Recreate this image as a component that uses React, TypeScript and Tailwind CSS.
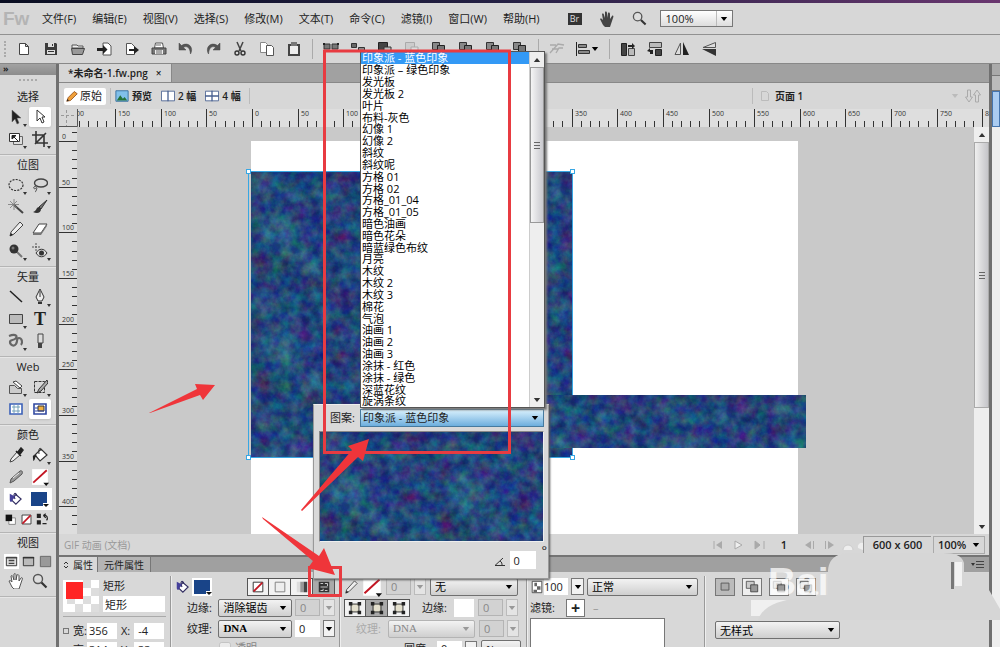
import type { ReactNode } from 'react';

const menus = ['文件(F)', '编辑(E)', '视图(V)', '选择(S)', '修改(M)', '文本(T)', '命令(C)', '滤镜(I)', '窗口(W)', '帮助(H)'];

const patterns = [
  '印象派 - 蓝色印象', '印象派 – 绿色印象', '发光板', '发光板 2', '叶片', '布料-灰色', '幻像 1', '幻像 2', '斜纹', '斜纹呢',
  '方格 01', '方格 02', '方格_01_04', '方格_01_05', '暗色油画', '暗色花朵', '暗蓝绿色布纹', '月亮', '木纹', '木纹 2',
  '木纹 3', '棉花', '气泡', '油画 1', '油画 2', '油画 3', '涂抹 - 红色', '涂抹 - 绿色', '深蓝花纹', '旋涡条纹',
];

const icons: Record<string, ReactNode> = {
  file: <path d="M3.500 2.500h6l3 3v8h-9z M9.500 2.500v3h3" fill="#fff" stroke="#444" />,
  save: <><path d="M2 2h11l1 1v11H2z" fill="#3c3c3c" /><path d="M5 2h6v4H5z M4 9h8v4H4z" fill="#ddd" /><path d="M9 3h1v2H9z M5 10h6v1H5z" fill="#333" /></>,
  open: <><path d="M2 4h5l1 1h5v2H2z" fill="#eee" stroke="#555" /><path d="M1.500 7.500h13l-2 6h-10z" fill="#999" stroke="#444" /></>,
  importFile: <><path d="M6 2h5l3 3v9H6z" fill="#fff" stroke="#555" /><path d="M0 7h6V4l4.500 4.500L6 13v-3H0z" fill="#222" /></>,
  exportFile: <><path d="M2.500 2.500h5l3 3v8h-8z" fill="#fff" stroke="#555" /><path d="M5 8h5V5l5 4-5 4v-3H5z" fill="#222" /></>,
  print: <><path d="M4.500 2h7l1 5h-9z" fill="#fff" stroke="#555" /><path d="M1 7h14v6H1z" fill="#777" stroke="#444" /><path d="M4 9h8v4H4z" fill="#eee" /><path d="M5 10h6M5 12h6M5 4h5" stroke="#666" /></>,
  undo: <path d="M1 2v7h7L5.500 6.500C9 4 12 7 12.500 13 16 7 11 0 3.500 4.500z" fill="#555" stroke="#444" strokeWidth=".5" />,
  redo: <path d="M15 2v7H8l2.500-2.500C7 4 4 7 3.500 13 0 7 5 0 12.500 4.500z" fill="#555" stroke="#444" strokeWidth=".5" />,
  cut: <><path d="M5 1l4 9M11 1L7 10" stroke="#444" strokeWidth="1.500" fill="none" /><circle cx="5" cy="12" r="2" fill="none" stroke="#333" strokeWidth="1.400" /><circle cx="11" cy="12" r="2" fill="none" stroke="#333" strokeWidth="1.400" /></>,
  copy: <><path d="M1.500 1.500h5l2 2v8h-7z" fill="#fff" stroke="#888" /><path d="M7.500 4.500h5l2 2v8h-7z" fill="#fff" stroke="#555" /></>,
  paste: <><path d="M2 3h12v12H2z" fill="#444" /><path d="M4 5h8v8H4z" fill="#eee" /><path d="M5 1h6v4H5z" fill="#777" /></>,
  group: <><path d="M1 3h6v5H1z M9 3h6v5H9z" fill="#777" stroke="#333" /><path d="M0 2h2v2H0z M14 2h2v2h-2z" fill="#222" /></>,
  ungroup: <><path d="M1.500 2.500h5v4h-5z" fill="#666" stroke="#333" /><path d="M8.500 6.500h6v4h-6z" fill="#888" stroke="#333" /></>,
  join: <><path d="M1.500 1.500h9v9h-9z" fill="#444" stroke="#222" /><path d="M7 6h7v7H7z" fill="#bbb" stroke="#333" /></>,
  joinOff: <><path d="M1.500 1.500h9v9h-9z" fill="#ccc" stroke="#aaa" /><path d="M7 6h7v7H7z" fill="#ddd" stroke="#aaa" /></>,
  front: <><path d="M1.500 1.500h7v7h-7z" fill="#888" stroke="#333" /><path d="M6.500 4.500h7v7h-7z" fill="#777" stroke="#222" /></>,
  path: <path d="M1 4h6M3 8h6M1 12l8-9 6 1M7 12l3-5h4" fill="none" stroke="#aaa" strokeWidth="1.300" />,
  align: <><path d="M1.500 1v14" stroke="#222" /><path d="M3.500 3.500h8v3h-8z M3.500 9.500h11v3h-11z" fill="#888" stroke="#333" /></>,
  rotateCw: <><path d="M1.500 2.500h5v12h-5z" fill="#444" stroke="#222" /><path d="M8.500 7.500h6v7h-6z" fill="#bbb" stroke="#444" /><path d="M8 4h4V2l3 3-3 3V6H8z" fill="#222" /></>,
  rotateCcw: <><path d="M2.500 1.500h12v5h-12z" fill="#bbb" stroke="#444" /><path d="M8.500 8.500h6v6h-6z" fill="#444" stroke="#222" /><path d="M6 13H3v-2L0 10l3-3v2h3z" fill="#222" /></>,
  flipH: <><path d="M6.500 2v11.500H1z" fill="#ddd" stroke="#555" /><path d="M9 1v13h6z" fill="#222" /></>,
  flipV: <><path d="M14.500 1.500v5H2z" fill="#ddd" stroke="#555" /><path d="M1 8h14v7z" fill="#333" /></>,
  pointer: <path d="M4 1v12l3-3 2 5 2-1-2-5h4z" fill="#222" stroke="#666" strokeWidth=".5" />,
  subPointer: <path d="M5 1v11l3-3 2 5 2-1-2-5h3z" fill="#fff" stroke="#333" />,
  scale: <><path d="M5.500 5.500h9v8h-9z" fill="#ddd" stroke="#666" /><path d="M1.500 2.500h10v8h-10z" fill="#fff" stroke="#333" /><path d="M4 4.500h4L4 8z M5 5l5 5" fill="#222" stroke="#222" /></>,
  crop: <path d="M4 0v12h12M0 4h12v12M3 13L14 2" fill="none" stroke="#333" strokeWidth="1.600" />,
  marquee: <ellipse cx="8" cy="8" rx="7" ry="5.500" fill="none" stroke="#333" strokeDasharray="2 1.200" strokeWidth="1.200" />,
  lasso: <><ellipse cx="9" cy="6" rx="6.500" ry="4" fill="none" stroke="#444" strokeWidth="1.400" /><path d="M4 9c-4 1-2 4 0 2s0 4-1 4" fill="none" stroke="#444" /></>,
  wand: <><path d="M6 6l9 8" stroke="#444" strokeWidth="2" /><path d="M6 0v11M0 5.500h11M2 2l7 7M9 2L2 9" stroke="#777" strokeWidth=".8" /></>,
  brush: <><path d="M15 1L7 8l2 2z" fill="#777" stroke="#333" /><path d="M7 8c-3 0-2 4-6 5 4 2 8 1 8-3z" fill="#333" /></>,
  pencil: <><path d="M12 1l3 3-9 9-4 2 1-4z" fill="#eee" stroke="#444" /><path d="M2 15l1-3 2 2z" fill="#222" /></>,
  strokePencil: <><path d="M12 2c2-1 3 1 2 3l-8 7-4 2 1-4z" fill="#999" stroke="#555" /><path d="M5 9l6-5" stroke="#eee" /></>,
  eraser: <><path d="M7 3h8l-6 9H1z" fill="#fff" stroke="#444" /><path d="M1 12h8v2H1z M9 12l6-9v2l-6 9" fill="#777" /></>,
  blur: <><path d="M8 8l6 6" stroke="#777" strokeWidth="2" /><circle cx="6" cy="6" r="4.500" fill="#333" /><circle cx="5" cy="5" r="1.500" fill="#777" /></>,
  stamp: <><path d="M4 0v8M0 4h8" stroke="#555" strokeDasharray="2 1" /><path d="M4 10c3-5 8-5 11 0-3 5-8 5-11 0z" fill="#ddd" stroke="#333" /><circle cx="9.500" cy="10" r="2.500" fill="#333" /></>,
  line: <path d="M2 2l12 11" stroke="#222" strokeWidth="1.500" />,
  pen: <><path d="M8 0l4 8-2 4H6L4 8z" fill="#eee" stroke="#333" /><path d="M6 13h4v2H6z M7.500 2h1v6h-1z" fill="#333" /></>,
  rect: <path d="M1.500 3.500h13v9h-13z" fill="#bbb" stroke="#444" />,
  freeform: <path d="M1 3c5-2 9-1 7 2s-6 1-6 4 4 5 6 2 0-6 3-6 4 5 2 7" fill="none" stroke="#666" strokeWidth="2.200" />,
  knife: <><path d="M6 1h5v9H6z" fill="#ddd" stroke="#444" /><path d="M6 10h4v5H6z" fill="#444" /></>,
  hotspot: <><path d="M1.500 6.500h5l3 3h4v5h-12z" fill="#ccc" stroke="#555" /><path d="M5 3l7 6 2-2-6-5z" fill="#fff" stroke="#444" /></>,
  slice: <><path d="M2.500 2.500h10v11h-10z" fill="none" stroke="#333" strokeDasharray="3 1" /><path d="M15 1l-8 9-2 4 4-2 7-8z" fill="#aaa" stroke="#333" /></>,
  hideSlice: <><path d="M2 3h12v10H2z" fill="#fff" stroke="#3c62b8" strokeWidth="1.600" /><path d="M4 6h8M4 10h8M6 4v8M10 4v8" stroke="#72a0b8" /></>,
  showSlice: <><path d="M2 3h12v10H2z" fill="#fff" stroke="#3048a0" strokeWidth="1.600" /><path d="M6 5h6v5H6z" fill="#f0b040" stroke="#333" /><path d="M3 7h3M3 10h9" stroke="#3048a0" /></>,
  dropper: <><path d="M9 5l3 3-7 6-3 1 1-3z" fill="#eee" stroke="#444" /><path d="M8 4l5 5M10 5l3-4 2 2-3 4z" fill="#222" stroke="#222" strokeWidth="1.500" /></>,
  bucket: <><path d="M3 8l6-6 6 6-7 6z" fill="#fff" stroke="#333" strokeWidth="1.200" /><path d="M7 7C6 1 9-1 9 4" fill="none" stroke="#333" /><path d="M3 8c-4 0-1 4-2 6 3-1 1-4 4-5z" fill="#222" /></>,
  fillBucket: <><path d="M4 9l5-6 6 5-6 6z" fill="#fff" stroke="#302c60" strokeWidth="1.300" /><path d="M8 8C5 1 9 0 10 4" fill="none" stroke="#302c60" strokeWidth="1.300" /><path d="M2 2v7c0 3 3 3 3 0l3-4z" fill="#45409a" /></>,
  hand: <path d="M4 14L1 8c1-1 2 0 3 1L3 3c1-1 2 0 2 1l1 3V1c1-1 2 0 2 1v5l1-5c1-1 2 0 2 1v5l2-3c1-1 2 0 1 2l-2 6-1 3H6z" fill="#fff" stroke="#444" strokeWidth=".9" />,
  handDark: <path d="M4 14L1 8c1-1 2 0 3 1L3 3c1-1 2 0 2 1l1 3V1c1-1 2 0 2 1v5l1-5c1-1 2 0 2 1v5l2-3c1-1 2 0 1 2l-2 6-1 3H6z" fill="#444" />,
  zoom: <><circle cx="6" cy="6" r="4.500" fill="#ddd" stroke="#555" strokeWidth="1.400" /><path d="M9.500 9.500l5 5" stroke="#333" strokeWidth="2.200" /></>,
  screen: <><path d="M2.500 3.500h11v9h-11z" fill="#ddd" stroke="#333" /><path d="M2 4h12M5 7h6M5 10h6" stroke="#444" strokeWidth="1.500" /></>,
  screenMenu: <><path d="M2.500 3.500h11v9h-11z" fill="#bbb" stroke="#333" /><path d="M2 4h12" stroke="#333" strokeWidth="1.500" /></>,
  screenFull: <path d="M2.500 2.500h11v11h-11z" fill="#999" stroke="#666" />,
  noColor: <><path d="M1 1h14v14H1z" fill="#fff" /><path d="M2 13L14 2" stroke="#c31522" strokeWidth="1.600" /><path d="M11 13h5l-2.500 3z" fill="#111" /></>,
  noFill: <><path d="M2.500 2.500h11v11h-11z" fill="#fff" stroke="#222" /><path d="M3 13L13 3" stroke="#c31522" strokeWidth="2" /></>,
  defaults: <><path d="M6 6h8v8H6z" fill="#fff" stroke="#777" /><path d="M2 2h8v8H2z" fill="#111" /></>,
  swap: <><path d="M1 1h5v5H1z M1 9h5v5H1z" fill="#222" /><path d="M9 3c5-1 6 3 4 6M9 3l3-2M9 3l3 3M13 13H8" fill="none" stroke="#222" strokeWidth="1.500" /></>,
  solid: <path d="M2.500 2.500h11v11h-11z" fill="#eee" stroke="#777" />,
  gradient: <><path d="M2 2h4v12H2z" fill="#ddd" /><path d="M6 2h4v12H6z" fill="#999" /><path d="M10 2h4v12h-4z" fill="#444" /></>,
  texture: <><path d="M2 2h12v12H2z" fill="#333" /><path d="M4 4h3M9 4h3v3M4 8h8M4 12h3v-2M9 12h3" stroke="#ddd" fill="none" /></>,
  node: <><path d="M3.500 3.500h9v9h-9z" fill="#e4e0cd" stroke="#222" /><path d="M1 1h4v4H1z M11 1h4v4h-4z M1 11h4v4H1z M11 11h4v4h-4z" fill="#222" /></>,
  opacity: <><path d="M2.500 1.500h11v13h-11z" fill="#fff" stroke="#444" /><path d="M5 3h3v4H5z M8 7h4v4H8z M4 11h4v3H4z" fill="#666" /></>,
  box: <path d="M3.500 3.500h9v8h-9z" fill="#aaa" stroke="#555" />,
  boxes: <><path d="M1.500 1.500h9v8h-9z" fill="#ccc" stroke="#555" /><path d="M6.500 5.500h8v8h-8z" fill="#999" stroke="#444" /></>,
  picture: <><path d="M1 2h14v12H1z" fill="#81c0ea" stroke="#346b9b" /><path d="M2 13l4-6 3 4 2-2 3 4z" fill="#25733a" /></>,
  two: <><path d="M.5 2.500h15v11H.5z" fill="#fff" stroke="#486090" /><path d="M8 2v12" stroke="#486090" strokeWidth="1.500" /></>,
  four: <><path d="M.5 2.500h15v11H.5z" fill="#fff" stroke="#486090" /><path d="M8 2v12M0 8h16" stroke="#486090" strokeWidth="1.500" /></>,
  orangePencil: <><path d="M11 2l4 3-9 9-5 1 2-5z" fill="#f0a03a" stroke="#874311" /><path d="M1 15l1-3 2 2z" fill="#222" /></>,
};

function Icon({ name, className = 'size-4' }: { name: string; className?: string }) {
  return <svg viewBox="0 0 16 16" className={`shrink-0 ${className}`} fill="none" aria-hidden="true">{icons[name]}</svg>;
}

function Arrow({ className = 'text-black' }: { className?: string }) {
  return <svg viewBox="0 0 8 5" className={`h-1 w-2 shrink-0 ${className}`} aria-hidden="true"><path d="M0 0h8L4 5z" fill="currentColor" /></svg>;
}

function Select({ label, value, className = '', disabled = false }: { label: string; value: string; className?: string; disabled?: boolean }) {
  return (
    <span className={`relative flex h-[18px] items-center rounded-xs border ${disabled ? 'border-[#b4b4b4] text-[#888]' : 'border-[#707070] text-black'} bg-gradient-to-b from-[#f3f3f3] to-[#cfcfcf] ${className}`}>
      <select aria-label={label} disabled={disabled} className="h-full w-full appearance-none bg-transparent pl-1 leading-none opacity-100 outline-none">
        <option>{value}</option>
      </select>
      <span className="pointer-events-none absolute right-1"><Arrow className={disabled ? 'text-[#999]' : 'text-black'} /></span>
    </span>
  );
}

function NumberBox({ label, value, disabled = false }: { label: string; value: string; disabled?: boolean }) {
  return (
    <span className="flex h-[17px] gap-[3px]">
      <input aria-label={label} defaultValue={value} disabled={disabled} className={`w-[25px] pl-1 ${disabled ? 'border border-[#b4b4b4] bg-[#d2d2d2] text-[#888]' : 'bg-white'}`} />
      <button aria-label={`${label} 选项`} disabled={disabled} className={`flex w-3 items-center justify-center border ${disabled ? 'border-[#bbb] bg-[#e4e4e4]' : 'border-[#777] bg-[#f2f2f2]'}`}>
        <Arrow className={disabled ? 'text-[#999]' : 'text-black'} />
      </button>
    </span>
  );
}

// Small repeating tile of coloured blots with grain over it
const blots: [number, number, number, number, string][] = [
  [28, 58, 20, 15, '#31759a'], [12, 14, 9, 9, '#4b5f95'], [48, 40, 8, 9, '#50269b'], [10, 92, 7, 10, '#571857'],
  [30, 97, 8, 6, '#1d6057'], [62, 96, 10, 8, '#3981a0'], [90, 8, 12, 8, '#501c80'], [92, 40, 9, 6, '#562691'],
  [88, 68, 8, 9, '#552078'], [62, 110, 7, 5, '#59204f'], [75, 22, 13, 10, '#245f9a'], [40, 78, 19, 7, '#2b6a94'],
  [66, 62, 13, 14, '#21349b'], [105, 95, 15, 10, '#23639c'], [104, 54, 12, 12, '#1c4b8c'], [35, 20, 15, 8, '#1c658e'],
  [8, 36, 7, 8, '#422383'], [110, 22, 8, 9, '#193a75'],
];

function Texture({ id, className = '' }: { id: string; className?: string }) {
  return (
    <svg className={`block ${className}`} aria-hidden="true">
      <defs>
        <filter id={`${id}-soft`} x="-20%" y="-20%" width="140%" height="140%" colorInterpolationFilters="sRGB"><feGaussianBlur stdDeviation="4" /></filter>
        <filter id={`${id}-grain`} x="0" y="0" width="100%" height="100%" colorInterpolationFilters="sRGB">
          <feTurbulence type="fractalNoise" baseFrequency=".1" numOctaves="4" seed="8" />
          <feColorMatrix values=".8 0 0 0 -.26  0 1.1 0 0 -.28  0 0 .7 0 .04  0 0 0 0 .42" />
        </filter>
        <pattern id={id} width="117" height="117" patternUnits="userSpaceOnUse">
          <rect width="117" height="117" fill="#1b4387" />
          <g filter={`url(#${id}-soft)`}>
            {[-117, 0, 117].map((dx) => [-117, 0, 117].map((dy) => blots.map(([x, y, rx, ry, fill], i) => (
              <ellipse key={`${dx}${dy}${i}`} cx={x + dx} cy={y + dy} rx={rx} ry={ry} fill={fill} />
            ))))}
          </g>
        </pattern>
      </defs>
      <rect width="100%" height="100%" fill={`url(#${id})`} />
      <rect width="100%" height="100%" filter={`url(#${id}-grain)`} />
    </svg>
  );
}

const unit = 9.13;

function TopRuler() {
  return (
    <svg className="h-[18px] w-full bg-[#dedede]" aria-hidden="true">
      {Array.from({ length: 105 }, (_, i) => i - 20).map((n) => {
        const x = Math.round(193 + n * unit);
        const major = n % 5 === 0;
        return (
          <g key={n}>
            <path d={`M${x + 0.5} ${major ? 0 : 12}V18`} stroke="#333" />
            {major && <text x={x + 3} y="7" fontSize="7" fill="#333">{Math.abs(n * 10)}</text>}
          </g>
        );
      })}
      <path d="M0 0h18v18H0z" fill="#d8d8d8" />
      <path d="M2 6.500h15M7.500 1v17" stroke="#999" strokeDasharray="3 2" />
      <path d="M0 17.500h18.500V0" stroke="#555" fill="none" />
    </svg>
  );
}

function SideRuler() {
  return (
    <svg className="h-full w-[18px] shrink-0 bg-[#dedede]" aria-hidden="true">
      {Array.from({ length: 46 }, (_, i) => i - 1).map((n) => {
        const y = Math.round(14 + n * unit);
        const major = n % 5 === 0;
        return (
          <g key={n}>
            <path d={`M${major ? 0 : 13} ${y + 0.5}H18`} stroke="#333" />
            {major && <text x="3" y={y - 2} fontSize="7" fill="#333">{n * 10}</text>}
          </g>
        );
      })}
    </svg>
  );
}

function Tool({ icon, label, active = false, menu = false }: { icon: string; label: string; active?: boolean; menu?: boolean }) {
  return (
    <button aria-label={label} className={`relative flex h-5 w-[22px] items-center justify-center rounded-xs ${active ? 'bg-white shadow-sm' : ''}`}>
      <Icon name={icon} />
      {menu && <svg viewBox="0 0 4 3" className="absolute right-0 bottom-0 h-[3px] w-1"><path d="M0 0h4L2 3z" fill="#333" /></svg>}
    </button>
  );
}

type ToolItem = [string, string, string?];
const sections: { title: string; tools: ToolItem[] }[] = [
  { title: '选择', tools: [['pointer', '指针', 'menu'], ['subPointer', '部分选定', 'active'], ['scale', '缩放', 'menu'], ['crop', '裁剪', 'menu']] },
  { title: '位图', tools: [['marquee', '选取框', 'menu'], ['lasso', '套索', 'menu'], ['wand', '魔术棒'], ['brush', '刷子'], ['pencil', '铅笔'], ['eraser', '橡皮擦'], ['blur', '模糊', 'menu'], ['stamp', '图章', 'menu']] },
  { title: '矢量', tools: [['line', '直线'], ['pen', '钢笔', 'menu'], ['rect', '矩形', 'menu'], ['text', '文本'], ['freeform', '自由变形', 'menu'], ['knife', '刀子']] },
  { title: 'Web', tools: [['hotspot', '热点', 'menu'], ['slice', '切片', 'menu'], ['hideSlice', '隐藏切片'], ['showSlice', '显示切片', 'active']] },
];

function Swatch() {
  return (
    <button aria-label="填充颜色" className="relative h-[18px] w-5 border-2 border-white bg-[#194488]">
      <svg viewBox="0 0 6 5" className="absolute -right-[2px] -bottom-[2px] h-[5px] w-[6px]" aria-hidden="true"><path d="M0 0h6v5H0z" fill="#fff" /><path d="M0 1h6L3 4z" fill="#111" /></svg>
    </button>
  );
}

function ToolPanel() {
  const title = 'flex h-[19px] items-center justify-center';
  const group = 'border-b border-[#b5b5b5] pb-1 shadow-[0_1px_0_#e6e6e6]';
  return (
    <aside className="w-[59px] shrink-0 border-r-[3px] border-[#707070] bg-[#d8d8d8]">
      <div className="h-[11px] bg-gradient-to-b from-[#a2a2a2] to-[#8c8c8c] pl-[3px] text-[9px] leading-[9px] font-bold">»</div>
      <div className="mx-auto mt-1 mb-[6px] w-[18px] border-b-2 border-dotted border-[#aaa]" />
      {sections.map((section) => (
        <section key={section.title} className={group}>
          <h2 className={title}>{section.title}</h2>
          <div className="grid grid-cols-[24px_24px] justify-start pl-1">
            {section.tools.map(([icon, label, state]) => (
              <div key={icon} className="flex h-[22px] items-center justify-center">
                {icon === 'text'
                  ? <button aria-label={label} className="font-['Liberation_Serif',serif] text-[18px] leading-5 font-bold">T</button>
                  : <Tool icon={icon} label={label} active={state === 'active'} menu={state === 'menu'} />}
              </div>
            ))}
          </div>
        </section>
      ))}
      <section className={group}>
        <h2 className={title}>颜色</h2>
        <div className="grid grid-cols-[24px_24px] justify-start pl-1">
          <div className="flex h-[22px] items-center justify-center"><Tool icon="dropper" label="滴管" /></div>
          <div className="flex h-[22px] items-center justify-center"><Tool icon="bucket" label="油漆桶" menu /></div>
          <div className="flex h-[22px] items-center justify-center"><Tool icon="strokePencil" label="笔触颜色" /></div>
          <button aria-label="无笔触" className="flex h-[22px] items-center justify-center"><Icon name="noColor" className="size-[18px]" /></button>
          <div className="col-span-2 flex h-[22px] items-center justify-around bg-white"><Icon name="fillBucket" className="size-[14px]" /><Swatch /></div>
        </div>
        <div className="flex h-[18px] items-center gap-[3px] pl-1">
          <button aria-label="默认颜色"><Icon name="defaults" className="size-[13px]" /></button>
          <button aria-label="无颜色"><Icon name="noFill" className="size-[13px]" /></button>
          <button aria-label="交换颜色"><Icon name="swap" className="size-[13px]" /></button>
        </div>
      </section>
      <section className={group}>
        <h2 className={title}>视图</h2>
        <div className="flex h-[18px] items-center gap-[2px] pl-1">
          <button aria-label="标准屏幕" className="bg-white"><Icon name="screen" className="size-[15px]" /></button>
          <button aria-label="带菜单的全屏"><Icon name="screenMenu" className="size-[15px]" /></button>
          <button aria-label="全屏"><Icon name="screenFull" className="size-[15px]" /></button>
        </div>
        <div className="flex h-[22px] items-center gap-1 pl-2">
          <button aria-label="手形"><Icon name="hand" /></button>
          <button aria-label="缩放工具"><Icon name="zoom" className="ml-1 size-4" /></button>
        </div>
      </section>
    </aside>
  );
}

function Handle({ className }: { className: string }) {
  return <span className={`absolute size-[5px] border border-[#38a7e4] bg-white ${className}`} />;
}

function Canvas() {
  return (
    <div className="relative min-w-0 flex-1 overflow-hidden bg-[#c9c9c9]">
      <div className="absolute top-[14px] left-[174px] h-[548px] w-[547px] bg-white" />
      <div className="absolute top-[44px] left-[171px] h-[287px] w-[325px] border border-[#38a7e4] pl-[2px]">
        <Texture id="large" className="size-full" />
        <Handle className="-top-[3px] -left-[3px]" />
        <Handle className="-top-[3px] -right-[3px]" />
        <Handle className="-bottom-[3px] -left-[3px]" />
        <Handle className="-right-[3px] -bottom-[3px]" />
      </div>
      <Texture id="bar" className="absolute top-[268px] left-[340px] h-[53px] w-[389px]" />
    </div>
  );
}

function ScrollArrow({ up = false }: { up?: boolean }) {
  return <button aria-label={up ? '向上滚动' : '向下滚动'} className="flex h-[15px] shrink-0 items-center justify-center"><Arrow className={up ? 'rotate-180 text-[#333]' : 'text-[#333]'} /></button>;
}

function Grip() {
  return <svg viewBox="0 0 6 8" className="h-2 w-[6px]" aria-hidden="true"><path d="M0 1.500h6M0 4.500h6M0 7.500h6" stroke="#666" /></svg>;
}

function StatusBar() {
  return (
    <footer className="flex h-[23px] shrink-0 items-center border-b-2 border-[#747474] bg-[#d7d7d7] font-semibold">
      <span className="pl-[5px] text-[10px] font-normal text-[#999]">GIF 动画 (文档)</span>
      <div className="ml-auto flex items-center gap-[11px] text-[#aaa]">
        <svg viewBox="0 0 52 10" className="h-[10px] w-[52px]" aria-hidden="true"><path d="M1 1v8M42 1l5 4-5 4zM51 1v8" stroke="#aaa" fill="#aaa" /><path d="M9 1v8L3 5z" fill="#aaa" /><path d="M22 1l7 4-7 4z" fill="#eee" stroke="#aaa" /></svg>
        <span className="px-[5px] text-[#222]">1</span>
        <svg viewBox="0 0 60 10" className="h-[10px] w-[60px]" aria-hidden="true"><path d="M8 1v8L2 5zM25 1v8l6-4z" fill="#aaa" /><path d="M10.500 1v8M22.500 1v8" stroke="#aaa" /><path d="M40 10a5 5 0 0 1 10 0" fill="#eee" stroke="#ccc" /><path d="M55 8a4 4 0 0 1 5-5v7z" fill="#eee" /></svg>
      </div>
      <span className="flex h-[18px] w-[68px] items-center justify-center border-t border-l border-[#999] whitespace-nowrap">600 x 600</span>
      <label className="relative ml-[2px] flex h-[18px] w-[52px] items-center border border-[#aaa]">
        <select aria-label="文档缩放" className="h-full w-full appearance-none bg-transparent pl-1"><option>100%</option></select>
        <span className="pointer-events-none absolute right-1"><Arrow /></span>
      </label>
      <span className="w-1" />
    </footer>
  );
}

function IconButtons({ names, label, selected }: { names: string[]; label: string; selected: number }) {
  return (
    <div className="flex h-[18px]">
      {names.map((name, i) => (
        <button key={i} aria-label={`${label} ${i + 1}`} className={`flex w-[22px] items-center justify-center border border-[#555] ${i === selected ? 'bg-[#aaa]' : 'bg-[#f2f2f2]'} ${i ? 'border-l-0' : ''}`}><Icon name={name} className="size-[14px]" /></button>
      ))}
    </div>
  );
}

function Properties() {
  const row = 'flex h-[21px] items-center';
  const col = 'shrink-0 border-r border-[#999] shadow-[1px_0_0_#eee]';
  return (
    <section className="h-[90px] shrink-0 overflow-hidden bg-[#d8d8d8]">
      <nav className="flex h-[15px] bg-[#a0a0a0]">
        <button className="flex items-center gap-1 bg-[#d8d8d8] px-1 text-[10px] leading-none"><svg viewBox="0 0 6 8" className="h-2 w-[6px]" fill="none" stroke="#333"><path d="M1 3l2-2 2 2M1 5l2 2 2-2" /></svg>属性</button>
        <button className="border-x border-[#777] bg-[#b4b4b4] px-[6px] text-[10px] leading-none">元件属性</button>
        <button aria-label="面板菜单" className="ml-auto pr-1"><svg viewBox="0 0 14 9" className="h-[9px] w-[14px]"><path d="M0 3h4L2 6z" fill="#333" /><path d="M5 1.500h8M5 4.500h8M5 7.500h8" stroke="#444" /></svg></button>
      </nav>
      <div className="flex h-[85px] pt-1">
        <div className={`${col} w-[112px] px-1`}>
          <div className="flex gap-1 border-b border-[#aaa] pt-1 pb-1">
            <svg viewBox="0 0 36 32" className="h-8 w-9 shrink-0"><path d="M0 0h36v32H0z" fill="#fff" /><path d="M20 0h8v8h-8zM28 8h8v8h-8zM20 16h8v8h-8zM28 24h8v8h-8zM12 24h8v8h-8zM4 16h8v8H4z" fill="#ddd" /><path d="M3 2h17v17H3z" fill="#ff2525" /></svg>
            <div className="flex min-w-0 flex-col gap-1">
              <span className="leading-3">矩形</span>
              <input aria-label="对象名称" defaultValue="矩形" className="h-[16px] w-[62px] bg-white pl-[2px] leading-none" />
            </div>
          </div>
          <div className="flex h-[23px] items-center pt-1">
            <span className="mr-1 size-[6px] border border-[#777]" />
            <label className="flex items-center">宽:<input defaultValue="356" className="h-4 w-[30px] bg-white pl-[2px]" /></label>
            <label className="ml-1 flex items-center gap-1">X:<input defaultValue="-4" className="h-4 w-[30px] bg-white pl-1" /></label>
          </div>
          <div className="flex h-5 items-center pl-[10px]">
            <label className="flex items-center">高:<input defaultValue="314" className="h-4 w-[30px] bg-white pl-[2px]" /></label>
            <label className="ml-1 flex items-center gap-1">Y:<input defaultValue="33" className="h-4 w-[30px] bg-white pl-1" /></label>
          </div>
        </div>
        <div className={`${col} w-[169px] px-1`}>
          <div className={row}>
            <Icon name="fillBucket" className="mr-[3px] size-[14px]" />
            <Swatch />
            <span className="ml-auto"><IconButtons names={['noFill', 'solid', 'gradient', 'texture']} label="填充" selected={3} /></span>
          </div>
          <div className={row}><span className="ml-3 w-8">边缘:</span><Select label="边缘" value="消除锯齿" className="mr-[3px] w-[75px]" /><NumberBox label="边缘量" value="0" disabled /></div>
          <div className={row}><span className="ml-3 w-8">纹理:</span><Select label="纹理" value="DNA" className="mr-[3px] w-[75px] font-['Liberation_Serif',serif] font-bold" /><NumberBox label="纹理量" value="0" /></div>
          <label className="ml-11 flex h-[18px] items-center gap-1 text-[#888]"><input type="checkbox" disabled className="size-3" />透明</label>
        </div>
        <div className={`${col} w-[187px] px-1`}>
          <div className={row}>
            <Icon name="pencil" className="size-[14px]" />
            <button aria-label="笔触颜色" className="mr-1 ml-1"><Icon name="noColor" className="size-5" /></button>
            <NumberBox label="笔触宽度" value="0" disabled />
            <Select label="笔触类型" value="无" className="ml-1 w-[88px]" />
          </div>
          <div className={row}>
            <IconButtons names={['node', 'node', 'node']} label="笔触位置" selected={1} />
            <span className="ml-3 w-8">边缘:</span>
            <span className="mr-1 h-[18px] w-5 bg-white" />
            <NumberBox label="笔触边缘" value="0" disabled />
          </div>
          <div className={row}><span className="ml-3 w-8 text-[#aaa]">纹理:</span><Select label="笔触纹理" value="DNA" disabled className="mr-1 w-[87px] font-['Liberation_Serif',serif]" /><NumberBox label="笔触纹理量" value="0" disabled /></div>
          <div className="flex h-5 items-center pl-[60px]"><span className="mr-2">圆度:</span><NumberBox label="圆度" value="0" /><Select label="圆度单位" value="%" className="ml-1 w-10" /></div>
        </div>
        <div className={`${col} w-[178px] px-[3px]`}>
          <div className={row}>
            <Icon name="opacity" className="size-[14px]" />
            <input aria-label="不透明度" defaultValue="100" className="h-[17px] w-[24px] bg-white" />
            <button aria-label="不透明度选项" className="mx-[3px] flex h-[17px] w-[13px] items-center justify-center border border-[#777] bg-[#f2f2f2]"><Arrow /></button>
            <Select label="混合模式" value="正常" className="w-[111px]" />
          </div>
          <div className={row}><span className="w-9">滤镜:</span><button aria-label="添加滤镜" className="h-[18px] w-[19px] border border-[#777] bg-white text-[16px] leading-none font-bold">+</button><span className="pl-2 text-[#999]">–</span></div>
          <div className="h-10 w-[135px] border border-[#777] bg-white" />
        </div>
        <div className="flex-1 pl-[10px]">
          <div className="flex h-[21px] items-center gap-[7px]">
            {['box', 'boxes', 'boxes', 'boxes'].map((name, i) => (
              <button key={i} aria-label={`路径组合 ${i + 1}`} className={`flex h-[18px] w-5 items-center justify-center border border-[#777] ${i ? 'bg-[#eee]' : 'bg-[#bbb]'}`}><Icon name={name} className="size-[14px]" /></button>
            ))}
          </div>
          <div className="mt-[3px] ml-9 h-4 w-12 bg-[#f0f0f0]" />
          <div className="pt-[5px]"><Select label="样式" value="无样式" className="w-[125px]" /></div>
        </div>
      </div>
    </section>
  );
}

function PatternPopup() {
  return (
    <>
      <div className="absolute top-[404px] left-[313px] w-[236px] border border-[#999] border-t-[#eee] bg-[#d9d9d9] pt-1 shadow-[1px_1px_2px_#555]">
        <div className="flex items-center pl-4">
          <span className="w-[30px]">图案:</span>
          <span className="relative flex h-[18px] flex-1 items-center border border-[#467a9e] bg-gradient-to-b from-[#d9f1fd] to-[#6caedd]">
            <select aria-label="图案" className="h-full w-full appearance-none bg-transparent pl-[2px]"><option>印象派 - 蓝色印象</option></select>
            <span className="pointer-events-none absolute right-1"><Arrow /></span>
          </span>
          <span className="w-1" />
        </div>
        <div className="mt-1 mr-1 ml-[5px] border border-[#eee] border-t-[#888] border-l-[#888]"><Texture id="preview" className="h-[109px] w-full" /></div>
        <label className="flex h-9 items-center justify-end gap-[5px] pr-px">
          <svg viewBox="0 0 11 8" className="mt-1 h-2 w-[11px]" fill="none" stroke="#333"><path d="M9 0L1 7.500h10M6 3c2 1 2 3 2 4" /></svg>
          <input aria-label="角度" defaultValue="0" className="h-[18px] w-[26px] bg-white pl-[3px]" />
          <span className="self-start text-[13px]">°</span>
        </label>
      </div>
      <div className="absolute top-[51px] left-[360px] flex h-[357px] w-[185px] border border-[#555] bg-white shadow-[2px_2px_2px_#777]">
        <ul role="listbox" aria-label="图案列表" className="flex min-w-0 flex-1 flex-col">
          {patterns.map((name, i) => (
            <li key={name} role="option" aria-selected={i === 0} className={`flex min-h-0 flex-1 items-center pl-px leading-none whitespace-nowrap ${i === 0 ? 'bg-[#3399f5] text-white' : 'text-black'}`}>{name}</li>
          ))}
        </ul>
        <div className="flex w-[15px] flex-col border-l border-[#ccc] bg-[#eee]">
          <ScrollArrow up />
          <div className="flex h-[156px] items-center justify-center border border-[#999] bg-gradient-to-r from-[#f5f5f5] to-[#c9c9ce]"><Grip /></div>
          <span className="flex-1" />
          <ScrollArrow />
        </div>
      </div>
    </>
  );
}

function Annotations() {
  return (
    <svg className="pointer-events-none absolute top-0 left-0 h-[647px] w-[1000px]" aria-hidden="true">
      <g fill="none" stroke="#e83b41" strokeWidth="3">
        <path d="M324.500 51h185v401.500h-185z" />
        <path d="M309.500 567.500h31v28h-31z" />
      </g>
      <g fill="#ef353a">
        <path d="M149 413l48-24-2-5 20 1-12 15-3-5-50 18z" />
        <path d="M301 510l51-60-4-4 21-7-6 22-5-4-56 54z" />
        <path d="M262 517l57 39 5-8 11 27-27-7 5-7-50-42z" />
      </g>
    </svg>
  );
}

function Watermark() {
  return (
    <svg viewBox="0 0 232 85" className="pointer-events-none absolute top-[549px] right-0 h-[85px] w-[232px] overflow-visible" aria-hidden="true">
      <text x="0" y="46" fontSize="39" fontWeight="bold" fill="#fff" fillOpacity=".72" fontFamily="Liberation Sans">Bai</text>
      <path d="M60 46V24C60 8 70 4 84 4h91c13 0 19 3 21 10v10h25v17l11 19v11H-10c4-13 20-20 42-22z" fill="#d6d6d6" />
      <path d="M187 13h7v24h-7z" fill="#f2f2f2" />
      <path d="M183 13h3v27h-3z" fill="#777" />
    </svg>
  );
}

export default function App() {
  const leftTools = ['file', 'save', 'open', 'importFile', 'exportFile', 'print', 'undo', 'redo', 'cut', 'copy', 'paste'];
  const groupTools = ['group', 'ungroup', 'join', 'joinOff', 'front', 'front', 'front', 'front'];
  return (
    <div className="relative flex h-screen w-full flex-col overflow-hidden bg-[#d7d7d7] font-['Open_Sans','Noto_Sans_CJK_SC',sans-serif] text-[11px] leading-4 text-[#222]">
      <div className="h-[3px] shrink-0 bg-gradient-to-r from-[#090d21] via-[#242044] to-[#69366f]" />
      <header className="flex h-8 shrink-0 items-center border-b border-[#919191]">
        <span className="w-[42px] pl-[3px] font-['Liberation_Sans',sans-serif] text-[19px] font-bold text-[#b4b4b4]">Fw</span>
        <nav className="flex gap-4 whitespace-nowrap">
          {menus.map((menu) => <button key={menu}>{menu}</button>)}
        </nav>
        <div className="ml-7 flex items-center gap-[17px]">
          <button aria-label="Bridge" className="h-3 w-[14px] bg-[#333] text-[9px] leading-3 text-[#ddd]">Br</button>
          <button aria-label="手形工具"><Icon name="handDark" /></button>
          <button aria-label="放大镜"><Icon name="zoom" className="size-[15px]" /></button>
        </div>
        <label className="relative ml-[13px] flex h-[17px] w-[73px] items-center border border-[#777] bg-gradient-to-b from-white to-[#ddd]">
          <select aria-label="缩放比例" className="h-full w-full appearance-none bg-transparent pl-[5px]"><option>100%</option></select>
          <span className="pointer-events-none absolute right-0 flex h-full w-4 items-center justify-center border-l border-[#bbb]"><Arrow /></span>
        </label>
      </header>
      <div className="flex h-[29px] shrink-0 items-center border-b border-[#888]">
        <span className="mr-[10px] ml-1 h-4 border-l-2 border-dotted border-[#aaa]" />
        <div className="flex gap-[11px]">{leftTools.map((name) => <button key={name} aria-label={name}><Icon name={name} /></button>)}</div>
        <span className="mx-[10px] h-5 border-l border-[#aaa]" />
        <div className="flex gap-[11px]">{groupTools.map((name, i) => <button key={i} aria-label={`${name} ${i}`}><Icon name={name} /></button>)}</div>
        <span className="mx-[10px] h-5 border-l border-[#aaa]" />
        <div className="flex items-center gap-[10px]"><Icon name="path" /><button aria-label="对齐" className="flex items-center"><Icon name="align" /><Arrow /></button></div>
        <span className="mx-[10px] h-5 border-l border-[#aaa]" />
        <div className="flex gap-[11px]">{['rotateCw', 'rotateCcw', 'flipH', 'flipV'].map((name) => <button key={name} aria-label={name}><Icon name={name} /></button>)}</div>
      </div>
      <div className="flex min-h-0 flex-1">
        <ToolPanel />
        <main className="flex min-w-0 flex-1 flex-col">
          <div className="flex h-[18px] shrink-0 bg-[#a1a1a1]">
            <button className="flex items-center gap-2 border-r border-[#888] bg-[#d6d6d6] px-[9px] text-[10px] leading-none font-semibold">*未命名-1.fw.png<span>×</span></button>
          </div>
          <div className="flex h-[27px] shrink-0 items-center border-t border-[#888] pl-[5px]">
            <button className="flex h-[17px] items-center gap-[2px] rounded-xs bg-white pr-1 pl-[2px]"><Icon name="orangePencil" className="size-3" />原始</button>
            <span className="mx-1 h-4 border-l border-[#bbb]" />
            <button className="mr-[9px] flex items-center gap-[3px] text-[10px] font-semibold"><Icon name="picture" className="size-[14px]" />预览</button>
            <button className="mr-[9px] flex items-center gap-[3px] text-[10px] font-semibold"><Icon name="two" className="size-[14px]" />2 幅</button>
            <button className="flex items-center gap-[3px] text-[10px] font-semibold"><Icon name="four" className="size-[14px]" />4 幅</button>
            <span className="mx-2 h-4 border-l border-[#bbb]" />
            <div className="ml-auto flex w-[237px] items-center border-l border-[#bbb] pl-[6px]">
              <svg viewBox="0 0 12 12" className="mr-1 size-3"><path d="M2.500 1.500h5l2 2v7h-7z" fill="none" stroke="#bbb" /></svg>
              <button className="text-[10px] font-semibold">页面 1</button>
              <span className="ml-auto"><Arrow className="text-[#bbb]" /></span>
              <svg viewBox="0 0 20 16" className="mx-[5px] h-4 w-5" fill="none" stroke="#aaa"><path d="M3.500 2v7h-2L5 14l3.500-5h-2V2zM11.500 14V7h-2L13 2l3.500 5h-2v7z" /></svg>
            </div>
          </div>
          <TopRuler />
          <div className="flex min-h-0 flex-1">
            <SideRuler />
            <Canvas />
            <div className="flex w-[15px] flex-col bg-[#eee]">
              <ScrollArrow up />
              <div className="flex h-[266px] items-center justify-center border border-[#aaa] bg-gradient-to-r from-[#efefef] to-[#c5c5c9]"><Grip /></div>
              <span className="flex-1" />
              <ScrollArrow />
            </div>
          </div>
          <StatusBar />
          <Properties />
        </main>
        <aside className="w-[11px] shrink-0 border-l-[3px] border-[#707070] bg-[#eee]">
          <div className="h-[11px] bg-[#aaa]" />
          <div className="h-4 border-y border-[#777] bg-[#bbb]" />
          <div className="h-9 border border-[#4575ae] bg-[#aaccf1]" />
        </aside>
      </div>
      <Watermark />
      <PatternPopup />
      <Annotations />
    </div>
  );
}
